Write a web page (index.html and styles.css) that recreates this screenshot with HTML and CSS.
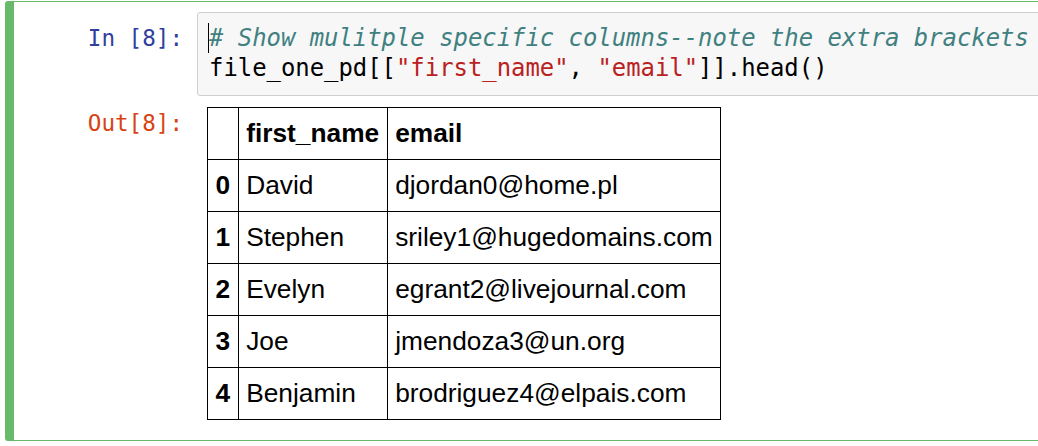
FILE: index.html
```html
<!DOCTYPE html>
<html>
<head>
<meta charset="utf-8">
<link rel="stylesheet" href="styles.css">
</head>
<body>
<div class="cell">
  <div class="input">
    <div class="prompt prompt-in">In&nbsp;[8]:</div>
    <div class="input-area">
      <div class="code-line"><span class="cursor"></span><span class="c-comment"># Show mulitple specific columns--note the extra brackets</span></div>
      <div class="code-line">file_one_pd[[<span class="c-string">"first_name"</span>, <span class="c-string">"email"</span>]].head()</div>
    </div>
  </div>
  <div class="output">
    <div class="prompt prompt-out">Out[8]:</div>
    <div class="output-area">
      <table class="dataframe">
        <thead>
          <tr><th></th><th>first_name</th><th>email</th></tr>
        </thead>
        <tbody>
          <tr><th>0</th><td>David</td><td>djordan0@home.pl</td></tr>
          <tr><th>1</th><td>Stephen</td><td>sriley1@hugedomains.com</td></tr>
          <tr><th>2</th><td>Evelyn</td><td>egrant2@livejournal.com</td></tr>
          <tr><th>3</th><td>Joe</td><td>jmendoza3@un.org</td></tr>
          <tr><th>4</th><td>Benjamin</td><td>brodriguez4@elpais.com</td></tr>
        </tbody>
      </table>
    </div>
  </div>
</div>
</body>
</html>
```
FILE: styles.css
```css
html, body {
  margin: 0;
  padding: 0;
  background: #ffffff;
  overflow: hidden;
}
body {
  width: 1038px;
  height: 446px;
}
.cell {
  margin: 1px 0 0 5px;
  width: 1100px;
  height: 440px;
  border: 1px solid #66bb6a;
  border-left-width: 9px;
  border-radius: 3px;
  box-sizing: border-box;
  padding-top: 10px;
}
.input, .output {
  display: flex;
  align-items: flex-start;
}
.prompt {
  width: 183px;
  flex: none;
  box-sizing: border-box;
  padding-right: 14px;
  text-align: right;
  font-family: "DejaVu Sans Mono", "Liberation Mono", monospace;
  font-size: 22.6px;
  line-height: 30px;
  white-space: nowrap;
}
.prompt-in {
  color: #303f9f;
  padding-top: 11px;
}
.prompt-out {
  color: #d84315;
  padding-top: 1px;
}
.input-area {
  flex: 1;
  background: #f7f7f7;
  border: 1px solid #cfcfcf;
  border-radius: 3px;
  padding: 10px 0 12px 11px;
  font-family: "DejaVu Sans Mono", "Liberation Mono", monospace;
  font-size: 23.9px;
  line-height: 30px;
  color: #000;
}
.code-line {
  position: relative;
  white-space: pre;
}
.cursor {
  position: absolute;
  left: -1px;
  top: 0;
  width: 1px;
  height: 30px;
  background: #000;
}
.c-comment {
  color: #408080;
  font-style: italic;
}
.c-string {
  color: #ba2121;
}
.output {
  margin-top: 11px;
}
.output-area {
  padding-left: 10px;
}
.dataframe {
  border-collapse: collapse;
  font-family: "Liberation Sans", Arial, sans-serif;
  font-size: 26.3px;
  color: #000;
}
.dataframe th, .dataframe td {
  border: 1px solid #000;
  padding: 13px 7.5px;
  line-height: 25px;
  height: 25px;
  text-align: left;
  vertical-align: middle;
  white-space: nowrap;
}
.dataframe th {
  font-weight: bold;
}
```
